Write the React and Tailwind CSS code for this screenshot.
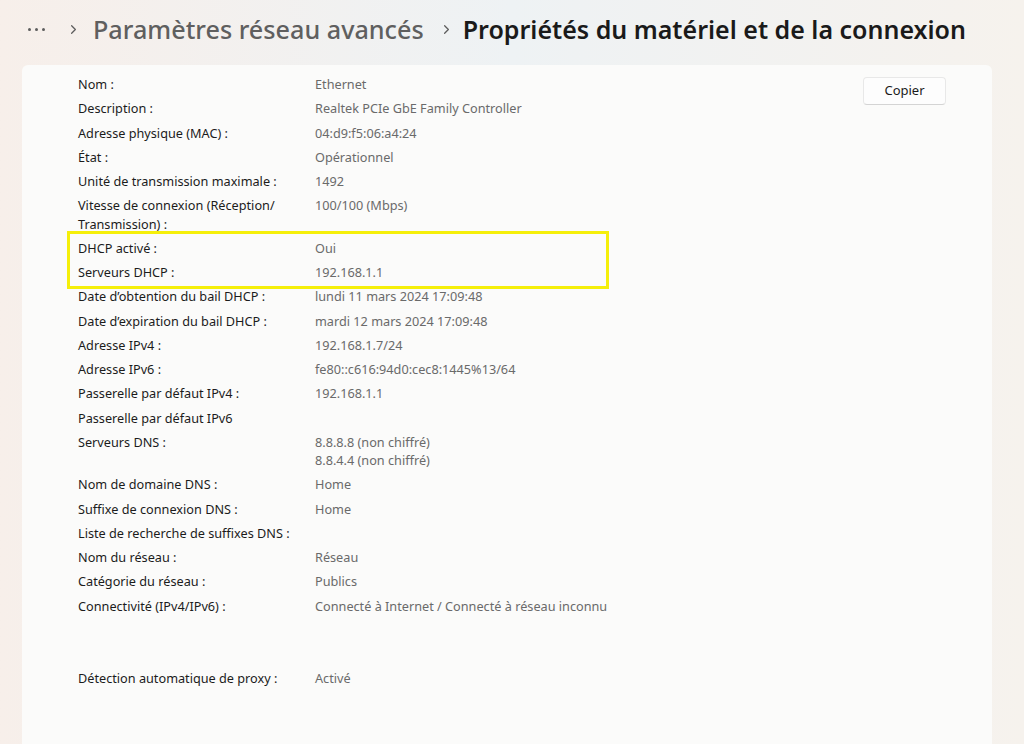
import { ChevronRight } from 'lucide-react';

const ROWS_TOP = [
  { label: 'Nom :', value: 'Ethernet' },
  { label: 'Description :', value: 'Realtek PCIe GbE Family Controller' },
  { label: 'Adresse physique (MAC) :', value: '04:d9:f5:06:a4:24' },
  { label: 'État :', value: 'Opérationnel' },
  { label: 'Unité de transmission maximale :', value: '1492' },
  { label: ['Vitesse de connexion (Réception/', 'Transmission) :'], value: '100/100 (Mbps)' },
];

const ROWS_DHCP = [
  { label: 'DHCP activé :', value: 'Oui' },
  { label: 'Serveurs DHCP :', value: '192.168.1.1' },
];

const ROWS_BOTTOM = [
  { label: 'Date d’obtention du bail DHCP :', value: 'lundi 11 mars 2024 17:09:48' },
  { label: 'Date d’expiration du bail DHCP :', value: 'mardi 12 mars 2024 17:09:48' },
  { label: 'Adresse IPv4 :', value: '192.168.1.7/24' },
  { label: 'Adresse IPv6 :', value: 'fe80::c616:94d0:cec8:1445%13/64' },
  { label: 'Passerelle par défaut IPv4 :', value: '192.168.1.1' },
  { label: 'Passerelle par défaut IPv6', value: '' },
  { label: 'Serveurs DNS :', value: ['8.8.8.8 (non chiffré)', '8.8.4.4 (non chiffré)'] },
  { label: 'Nom de domaine DNS :', value: 'Home' },
  { label: 'Suffixe de connexion DNS :', value: 'Home' },
  { label: 'Liste de recherche de suffixes DNS :', value: '' },
  { label: 'Nom du réseau :', value: 'Réseau' },
  { label: 'Catégorie du réseau :', value: 'Publics' },
  { label: 'Connectivité (IPv4/IPv6) :', value: 'Connecté à Internet / Connecté à réseau inconnu' },
];

const lines = v => (Array.isArray(v) ? v.map(l => <div key={l}>{l}</div>) : v);

function Row({ label, value }) {
  return (
    <div className="flex py-[3px] text-[12.7px] leading-[18.25px] whitespace-nowrap">
      <div className="w-[237px] shrink-0 text-[#1c1c1c]">{lines(label)}</div>
      <div className="text-[#6a6a6a]">{lines(value)}</div>
    </div>
  );
}

export default function App() {
  return (
    <div
      className="h-[744px] w-[1024px] overflow-hidden bg-linear-to-r from-[#f7efea] via-[#eef2f4] to-[#f6f2ed] text-[#1b1b1b]"
      style={{ fontFamily: '"Noto Sans", "Open Sans", sans-serif' }}
    >
      {/* Breadcrumb */}
      <div className="flex h-[65px] items-center pl-[28px] pb-[6px]">
        <div className="flex gap-[4px]">
          <span className="h-[3px] w-[3px] rounded-full bg-[#5d5d5d]" />
          <span className="h-[3px] w-[3px] rounded-full bg-[#5d5d5d]" />
          <span className="h-[3px] w-[3px] rounded-full bg-[#5d5d5d]" />
        </div>
        <ChevronRight size={15} strokeWidth={2} className="ml-[21px] text-[#5d5d5d]" />
        <span className="ml-[12px] text-[25.2px] font-medium text-[#5f5f5f]">Paramètres réseau avancés</span>
        <ChevronRight size={15} strokeWidth={2} className="ml-[15px] text-[#5d5d5d]" />
        <span className="ml-[9px] text-[25px] font-semibold text-[#1a1a1a]">Propriétés du matériel et de la connexion</span>
      </div>

      {/* Panel */}
      <div className="ml-[22px] flex h-[700px] w-[970px] rounded-t-[6px] bg-[#fbfbfa] pl-[56px] pt-[7px]">
        <div className="w-[700px]">
          {ROWS_TOP.map(r => <Row key={r.value} {...r} />)}
          <div className="-my-[5px] -ml-[11px] w-[542px] border-[3px] border-[#f5ef0a] py-[2px] pl-[8px]">
            {ROWS_DHCP.map(r => <Row key={r.label} {...r} />)}
          </div>
          {ROWS_BOTTOM.map(r => <Row key={r.label} {...r} />)}
          <div className="h-[48.5px]" />
          <Row label="Détection automatique de proxy :" value="Activé" />
        </div>
        <div className="ml-[85px] pt-[5px]">
          <button className="h-[28px] w-[83px] rounded-[4px] border border-[#e8e8e8] border-b-[#d4d4d4] bg-[#fdfdfd] text-[13px] text-[#1b1b1b]">
            Copier
          </button>
        </div>
      </div>
    </div>
  );
}
